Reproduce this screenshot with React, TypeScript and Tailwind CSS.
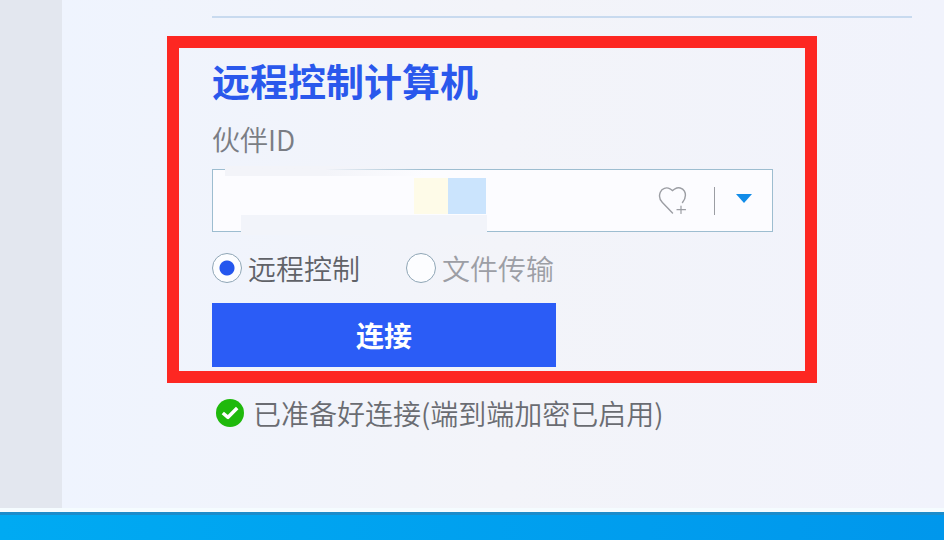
import { useState, FormEvent } from 'react';

type Mode = 'control' | 'transfer';

const modes: { value: Mode; label: string }[] = [
  { value: 'control', label: '远程控制' },
  { value: 'transfer', label: '文件传输' },
];

function HeartPlusIcon() {
  return (
    <svg width="30" height="30" viewBox="0 0 30 30" fill="none" stroke="#9b9da3" strokeWidth="1.4" strokeLinecap="round">
      <path d="M14.500 27 4.400 16.600C1.600 13.600 .8 9.800 2.300 6.200C4 2.300 8.300 .8 12 2.800L14.500 4.600L17 2.800C20.300 .8 24.500 1.800 26.400 5.200C28.200 8.500 27.500 12.500 24.500 16.500" />
      <path d="M23 20V27.500M19 23.700H27.500" strokeWidth="1.2" />
    </svg>
  );
}

function ReadyIcon() {
  return (
    <svg width="28" height="28" viewBox="0 0 28 28" fill="none" className="shrink-0">
      <circle cx="14" cy="14" r="14" fill="#1fb90c" />
      <path d="M6.800 14 12 18.300 21.200 9" stroke="#fff" strokeWidth="3.500" strokeLinejoin="round" />
    </svg>
  );
}

export default function App() {
  const [mode, setMode] = useState<Mode>('control');
  const [partnerId, setPartnerId] = useState('');

  const handleSubmit = (e: FormEvent) => {
    e.preventDefault();
  };

  return (
    <div className="flex min-h-screen flex-col bg-[#f1f3fb] font-['Noto_Sans_CJK_SC',sans-serif] font-[350] text-[#6a6c72]">
      <div className="flex grow">
        <aside className="w-[62px] shrink-0 bg-[#e3e7ef]" />
        <main className="min-w-0 grow bg-linear-to-r from-[#eff4fe] via-[#f3f4f9] to-[#f1f3fc] pt-4">
          <hr className="ml-[150px] mr-8 border-t-2 border-[#c8daef]" />

          <form
            onSubmit={handleSubmit}
            className="ml-[105px] mr-[127px] mt-[18px] border-12 border-[#fd2722] pb-1 pl-[33px] pr-8 pt-[7px]"
          >
            <h1 className="text-[38px] font-bold leading-[50px] text-[#2a58ec]">远程控制计算机</h1>
            <label htmlFor="partner" className="mt-[18px] block text-[28px] leading-8 text-[#7a7d84]">
              伙伴ID
            </label>

            <div className="relative mt-[14px] flex h-[63px] items-center border border-[#9dbdd0] bg-[#fcfcff] pr-5">
              <input
                id="partner"
                type="text"
                value={partnerId}
                onChange={(e) => setPartnerId(e.target.value)}
                className="h-full min-w-0 grow bg-transparent px-4 text-[28px] outline-none"
              />
              {/* masked value */}
              <div className="pointer-events-none absolute -top-1 left-3 h-[10px] w-[200px] bg-linear-to-r from-[#f3f4f9] from-50% to-transparent" />
              <div className="pointer-events-none absolute -bottom-1 left-7 h-5 w-[246px] bg-[#f2f4fa]" />
              <div className="pointer-events-none absolute left-[201px] top-2 flex h-9">
                <span className="w-[34px] bg-[#fefbe8]" />
                <span className="w-[38px] bg-[#cbe4fd]" />
              </div>

              <button type="button" aria-label="收藏">
                <HeartPlusIcon />
              </button>
              <span className="ml-[26px] h-7 w-px bg-[#9b9da3]" />
              <button type="button" aria-label="展开" className="ml-[21px] pb-1">
                <svg width="16" height="9" viewBox="0 0 16 9" fill="#128ce8">
                  <path d="M0 0H16L8 9Z" />
                </svg>
              </button>
            </div>

            <div className="mt-5 flex gap-[46px]">
              {modes.map((m) => (
                <label
                  key={m.value}
                  className={`flex items-center gap-[6px] text-[28px] leading-8 ${
                    m.value === 'control' ? 'text-[#606268]' : 'text-[#9c9ea5]'
                  }`}
                >
                  <input
                    type="radio"
                    name="mode"
                    value={m.value}
                    checked={mode === m.value}
                    onChange={() => setMode(m.value)}
                    className="size-[30px] shrink-0 appearance-none rounded-full border border-[#8fa6b6] bg-[#fcfdff] checked:bg-[radial-gradient(circle,#2456ee_7px,#fcfdff_8px)]"
                  />
                  {m.label}
                </label>
              ))}
            </div>

            <button
              type="submit"
              className="mt-[19px] block h-16 w-[344px] max-w-full bg-[#2b5cf6] text-[28px] font-bold text-white"
            >
              连接
            </button>
          </form>

          <p className="ml-[154px] mt-[14px] flex items-center gap-[9px] text-[28px] leading-8">
            <ReadyIcon />
            已准备好连接(端到端加密已启用)
          </p>
        </main>
      </div>
      <footer className="h-8 border-t-4 border-[#f5fcff] bg-linear-to-r from-[#00aaf2] to-[#0097ec]">
        <div className="h-[3px] bg-[#1b8ccb]" />
      </footer>
    </div>
  );
}
